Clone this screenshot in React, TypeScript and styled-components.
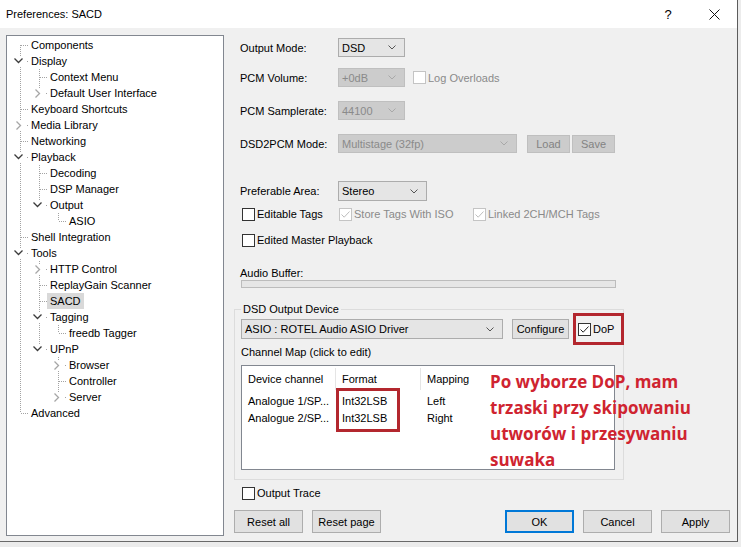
import React from 'react';
import styled, { createGlobalStyle } from 'styled-components';

const GlobalStyle = createGlobalStyle`
  html, body {
    margin: 0;
    padding: 0;
    background: #ececec;
  }
  body {
    font-family: "Liberation Sans", Arial, sans-serif;
    font-size: 11px;
    color: #000;
  }
  * {
    box-sizing: border-box;
  }
`;

const Screen = styled.div`
  width: 741px;
  height: 547px;
  overflow: hidden;
  background: #ececec;
`;

const Dialog = styled.div`
  width: 738px;
  height: 542px;
  display: flex;
  flex-direction: column;
  background: #f0f0f0;
  border-right: 1px solid #5c5c5c;
  border-bottom: 1px solid #6a6a6a;
`;

const TitleBar = styled.div`
  height: 28px;
  flex-shrink: 0;
  display: flex;
  align-items: center;
  background: #fff;
  padding-left: 6px;
  font-size: 11px;
`;

const Title = styled.div`
  flex: 1;
`;

const CaptionButton = styled.div`
  width: 46px;
  height: 28px;
  display: flex;
  align-items: center;
  justify-content: center;
  font-size: 13px;
`;

const Body = styled.div`
  flex: 1;
  display: flex;
  align-items: flex-start;
  padding-left: 6px;
`;

/* ---------- tree ---------- */

const TreePanel = styled.div`
  width: 218px;
  height: 501px;
  flex-shrink: 0;
  margin-top: 7px;
  background: #fff;
  border: 1px solid #828790;
  padding-top: 1px;
`;

const TreeRow = styled.div`
  height: 16px;
  display: flex;
  align-items: center;
`;

const TreeLabel = styled.span<{ $selected?: boolean }>`
  margin-left: -1px;
  padding: 1px 3px;
  line-height: 14px;
  white-space: nowrap;
  background: ${(p) => (p.$selected ? '#d9d9d9' : 'transparent')};
`;

type TreeNode = {
  label: string;
  depth: number;
  expand?: 'open' | 'closed';
  selected?: boolean;
};

const tree: TreeNode[] = [
  { label: 'Components', depth: 0 },
  { label: 'Display', depth: 0, expand: 'open' },
  { label: 'Context Menu', depth: 1 },
  { label: 'Default User Interface', depth: 1, expand: 'closed' },
  { label: 'Keyboard Shortcuts', depth: 0 },
  { label: 'Media Library', depth: 0, expand: 'closed' },
  { label: 'Networking', depth: 0 },
  { label: 'Playback', depth: 0, expand: 'open' },
  { label: 'Decoding', depth: 1 },
  { label: 'DSP Manager', depth: 1 },
  { label: 'Output', depth: 1, expand: 'open' },
  { label: 'ASIO', depth: 2 },
  { label: 'Shell Integration', depth: 0 },
  { label: 'Tools', depth: 0, expand: 'open' },
  { label: 'HTTP Control', depth: 1, expand: 'closed' },
  { label: 'ReplayGain Scanner', depth: 1 },
  { label: 'SACD', depth: 1, selected: true },
  { label: 'Tagging', depth: 1, expand: 'open' },
  { label: 'freedb Tagger', depth: 2 },
  { label: 'UPnP', depth: 1, expand: 'open' },
  { label: 'Browser', depth: 2, expand: 'closed' },
  { label: 'Controller', depth: 2 },
  { label: 'Server', depth: 2, expand: 'closed' },
  { label: 'Advanced', depth: 0 },
];

const hasNextSibling = (i: number) => {
  const d = tree[i].depth;
  for (let j = i + 1; j < tree.length; j++) {
    if (tree[j].depth < d) return false;
    if (tree[j].depth === d) return true;
  }
  return false;
};

const ancestorContinues = (i: number, level: number) => {
  for (let j = i - 1; j >= 0; j--) {
    if (tree[j].depth === level) return hasNextSibling(j);
  }
  return false;
};

const DOT = '#a3a3a3';

// pass-through guide for an ancestor level
const GuideLine = ({ on }: { on: boolean }) => (
  <svg width="19" height="16" style={{ flexShrink: 0, display: 'block' }}>
    {on && <line x1="13.5" y1="0" x2="13.5" y2="16" stroke={DOT} strokeDasharray="1 1" />}
  </svg>
);

// junction for the item itself
const GuideNode = ({
  top,
  bottom,
  expand,
}: {
  top: boolean;
  bottom: boolean;
  expand?: 'open' | 'closed';
}) => (
  <svg width="22" height="16" style={{ flexShrink: 0, display: 'block' }}>
    {top && <line x1="13.5" y1="0" x2="13.5" y2="8" stroke={DOT} strokeDasharray="1 1" />}
    {bottom && <line x1="13.5" y1="8" x2="13.5" y2="16" stroke={DOT} strokeDasharray="1 1" />}
    <line x1="14" y1="8.5" x2="22" y2="8.5" stroke={DOT} strokeDasharray="1 1" />
    {expand && <rect x="5" y="3" width="14" height="10" fill="#fff" />}
    {expand === 'open' && (
      <polyline
        points="7.5,5.5 11.5,9.5 15.5,5.5"
        fill="none"
        stroke="#3c3c3c"
        strokeWidth="1.3"
      />
    )}
    {expand === 'closed' && (
      <polyline
        points="9.5,4.5 13.5,8.5 9.5,12.5"
        fill="none"
        stroke="#a6a6a6"
        strokeWidth="1.3"
      />
    )}
  </svg>
);

const Tree = () => (
  <TreePanel>
    {tree.map((node, i) => (
      <TreeRow key={node.label}>
        {Array.from({ length: node.depth }).map((_, k) => (
          <GuideLine key={k} on={ancestorContinues(i, k)} />
        ))}
        <GuideNode top={i !== 0} bottom={hasNextSibling(i)} expand={node.expand} />
        <TreeLabel $selected={node.selected}>{node.label}</TreeLabel>
      </TreeRow>
    ))}
  </TreePanel>
);

/* ---------- right side ---------- */

const Settings = styled.div`
  flex: 1;
  display: flex;
  flex-direction: column;
  margin-left: 10px;
  padding-right: 7px;
`;

const Row = styled.div<{ $mt: number; $h: number; $pad?: number }>`
  display: flex;
  align-items: center;
  flex-shrink: 0;
  margin-top: ${(p) => p.$mt}px;
  height: ${(p) => p.$h}px;
  padding-left: ${(p) => (p.$pad ?? 6)}px;
`;

const FieldLabel = styled.div`
  width: 98px;
  flex-shrink: 0;
`;

const Combo = styled.div<{ $width: number; $disabled?: boolean; $h?: number }>`
  width: ${(p) => p.$width}px;
  height: ${(p) => p.$h ?? 19}px;
  flex-shrink: 0;
  display: flex;
  align-items: center;
  justify-content: space-between;
  padding: 0 8px 0 3px;
  background: ${(p) => (p.$disabled ? '#cccccc' : '#e5e5e5')};
  border: 1px solid ${(p) => (p.$disabled ? '#bfbfbf' : '#acacac')};
  color: ${(p) => (p.$disabled ? '#8a8a8a' : '#000')};
  white-space: nowrap;
`;

const ComboArrow = ({ disabled }: { disabled?: boolean }) => (
  <svg width="8" height="5" style={{ display: 'block' }}>
    <polyline
      points="0.5,0.5 4,4 7.5,0.5"
      fill="none"
      stroke={disabled ? '#a8a8a8' : '#555'}
      strokeWidth="1"
    />
  </svg>
);

const ComboBox = ({
  value,
  width,
  disabled,
  h,
}: {
  value: string;
  width: number;
  disabled?: boolean;
  h?: number;
}) => (
  <Combo $width={width} $disabled={disabled} $h={h}>
    <span>{value}</span>
    <ComboArrow disabled={disabled} />
  </Combo>
);

const Button = styled.div<{ $width: number; $h?: number; $disabled?: boolean; $primary?: boolean; $ml?: number }>`
  width: ${(p) => p.$width}px;
  height: ${(p) => p.$h ?? 23}px;
  margin-left: ${(p) => p.$ml ?? 0}px;
  flex-shrink: 0;
  display: flex;
  align-items: center;
  justify-content: center;
  background: ${(p) => (p.$disabled ? '#cccccc' : '#e1e1e1')};
  border: ${(p) => (p.$primary ? '2px solid #0078d7' : `1px solid ${p.$disabled ? '#bfbfbf' : '#adadad'}`)};
  color: ${(p) => (p.$disabled ? '#838383' : '#000')};
  font-size: 11px;
`;

const CheckItem = styled.div<{ $width?: number; $ml?: number; $disabled?: boolean }>`
  display: flex;
  align-items: center;
  flex-shrink: 0;
  width: ${(p) => (p.$width ? `${p.$width}px` : 'auto')};
  margin-left: ${(p) => p.$ml ?? 0}px;
  color: ${(p) => (p.$disabled ? '#8a8a8a' : '#000')};
  white-space: nowrap;
`;

const Box = styled.div<{ $disabled?: boolean }>`
  width: 13px;
  height: 13px;
  margin-right: 2px;
  flex-shrink: 0;
  background: #fff;
  border: 1px solid ${(p) => (p.$disabled ? '#c4c4c4' : '#333')};
`;

const CheckBox = ({
  label,
  checked,
  disabled,
  width,
  ml,
}: {
  label: string;
  checked?: boolean;
  disabled?: boolean;
  width?: number;
  ml?: number;
}) => (
  <CheckItem $width={width} $ml={ml} $disabled={disabled}>
    <Box $disabled={disabled}>
      {checked && (
        <svg width="11" height="11" style={{ display: 'block' }}>
          <polyline
            points="1.5,5.5 4.2,8.2 9.5,2.5"
            fill="none"
            stroke={disabled ? '#bdbdbd' : '#222'}
            strokeWidth="1"
          />
        </svg>
      )}
    </Box>
    <span>{label}</span>
  </CheckItem>
);

const Progress = styled.div`
  width: 375px;
  height: 8px;
  flex-shrink: 0;
  margin-left: 7px;
  background: #e6e6e6;
  border: 1px solid #bcbcbc;
`;

const GroupBox = styled.div`
  position: relative;
  width: 390px;
  height: 171px;
  flex-shrink: 0;
  margin-top: 21px;
  border: 1px solid #dcdcdc;
  padding: 9px 0 0 6px;
  display: flex;
  flex-direction: column;
`;

const Legend = styled.span`
  position: absolute;
  top: -7px;
  left: 6px;
  padding: 0 2px;
  background: #f0f0f0;
  line-height: 13px;
`;

const GroupRow = styled.div<{ $mt?: number; $h: number }>`
  display: flex;
  align-items: center;
  height: ${(p) => p.$h}px;
  margin-top: ${(p) => p.$mt ?? 0}px;
  flex-shrink: 0;
`;

const ListView = styled.div`
  position: relative;
  width: 374px;
  height: 105px;
  flex-shrink: 0;
  margin-top: 6px;
  background: #fff;
  border: 1px solid #828790;
`;

const ListGrid = styled.div<{ $h: number }>`
  display: grid;
  grid-template-columns: 94px 85px 1fr;
  height: ${(p) => p.$h}px;
  align-items: center;
`;

const HeaderCell = styled.div<{ $sep?: boolean }>`
  height: 22px;
  display: flex;
  align-items: center;
  padding-left: 6px;
  border-right: ${(p) => (p.$sep ? '1px solid #e5e5e5' : 'none')};
`;

const Cell = styled.div`
  padding-left: 6px;
  white-space: nowrap;
`;

const RedFrame = styled.div<{ $l: number; $t: number; $w: number; $h: number }>`
  position: absolute;
  left: ${(p) => p.$l}px;
  top: ${(p) => p.$t}px;
  width: ${(p) => p.$w}px;
  height: ${(p) => p.$h}px;
  border: 3px solid #b3272e;
  pointer-events: none;
`;

const Annotation = styled.div`
  position: absolute;
  left: 248px;
  top: 3px;
  font-family: "Open Sans", "Noto Sans", sans-serif;
  font-weight: 700;
  font-size: 17px;
  line-height: 26px;
  color: #cf2430;
  white-space: nowrap;
`;

const ButtonBar = styled.div`
  display: flex;
  align-items: center;
  height: 23px;
  margin-top: 10px;
  flex-shrink: 0;
`;

const Spacer = styled.div`
  flex: 1;
`;

const channels = [
  { name: 'Analogue 1/SP...', format: 'Int32LSB', map: 'Left' },
  { name: 'Analogue 2/SP...', format: 'Int32LSB', map: 'Right' },
];

const App = () => (
  <Screen>
    <GlobalStyle />
    <Dialog>
      <TitleBar>
        <Title>Preferences: SACD</Title>
        <CaptionButton>?</CaptionButton>
        <CaptionButton>
          <svg width="11" height="11" style={{ display: 'block' }}>
            <line x1="0.5" y1="0.5" x2="10.5" y2="10.5" stroke="#111" strokeWidth="1" />
            <line x1="10.5" y1="0.5" x2="0.5" y2="10.5" stroke="#111" strokeWidth="1" />
          </svg>
        </CaptionButton>
      </TitleBar>
      <Body>
        <Tree />
        <Settings>
          <Row $mt={10} $h={19}>
            <FieldLabel>Output Mode:</FieldLabel>
            <ComboBox value="DSD" width={67} />
          </Row>
          <Row $mt={11} $h={19}>
            <FieldLabel>PCM Volume:</FieldLabel>
            <ComboBox value="+0dB" width={67} disabled />
            <CheckBox label="Log Overloads" ml={8} disabled />
          </Row>
          <Row $mt={14} $h={19}>
            <FieldLabel>PCM Samplerate:</FieldLabel>
            <ComboBox value="44100" width={67} disabled />
          </Row>
          <Row $mt={14} $h={19}>
            <FieldLabel>DSD2PCM Mode:</FieldLabel>
            <ComboBox value="Multistage (32fp)" width={179} disabled />
            <Button $width={43} $h={18} $ml={10} $disabled>Load</Button>
            <Button $width={43} $h={18} $ml={2} $disabled>Save</Button>
          </Row>
          <Row $mt={28} $h={20}>
            <FieldLabel>Preferable Area:</FieldLabel>
            <ComboBox value="Stereo" width={89} h={20} />
          </Row>
          <Row $mt={6} $h={14}>
            <CheckBox label="Editable Tags" width={97} ml={2} />
            <CheckBox label="Store Tags With ISO" width={134} checked disabled />
            <CheckBox label="Linked 2CH/MCH Tags" checked disabled />
          </Row>
          <Row $mt={12} $h={14}>
            <CheckBox label="Edited Master Playback" ml={2} />
          </Row>
          <Row $mt={19} $h={14}>
            Audio Buffer:
          </Row>
          <Progress />
          <GroupBox>
            <Legend>DSD Output Device</Legend>
            <GroupRow $h={20}>
              <ComboBox value="ASIO : ROTEL Audio ASIO Driver" width={262} h={20} />
              <Button $width={57} $h={20} $ml={9}>Configure</Button>
              <CheckBox label="DoP" ml={9} checked />
            </GroupRow>
            <GroupRow $mt={6} $h={14}>Channel Map (click to edit)</GroupRow>
            <ListView>
              <ListGrid $h={26}>
                <HeaderCell $sep>Device channel</HeaderCell>
                <HeaderCell $sep>Format</HeaderCell>
                <HeaderCell>Mapping</HeaderCell>
              </ListGrid>
              {channels.map((c) => (
                <ListGrid $h={17} key={c.name}>
                  <Cell>{c.name}</Cell>
                  <Cell>{c.format}</Cell>
                  <Cell>{c.map}</Cell>
                </ListGrid>
              ))}
              <RedFrame $l={94} $t={22} $w={64} $h={44} />
              <Annotation>
                Po wyborze DoP, mam
                <br />
                trzaski przy skipowaniu
                <br />
                utworów i przesywaniu
                <br />
                suwaka
              </Annotation>
            </ListView>
            <RedFrame $l={338} $t={3} $w={51} $h={32} />
          </GroupBox>
          <Row $mt={6} $h={14}>
            <CheckBox label="Output Trace" ml={2} />
          </Row>
          <ButtonBar>
            <Button $width={69}>Reset all</Button>
            <Button $width={69} $ml={9}>Reset page</Button>
            <Spacer />
            <Button $width={69} $primary>OK</Button>
            <Button $width={69} $ml={9}>Cancel</Button>
            <Button $width={69} $ml={9}>Apply</Button>
          </ButtonBar>
        </Settings>
      </Body>
    </Dialog>
  </Screen>
);

export default App;
